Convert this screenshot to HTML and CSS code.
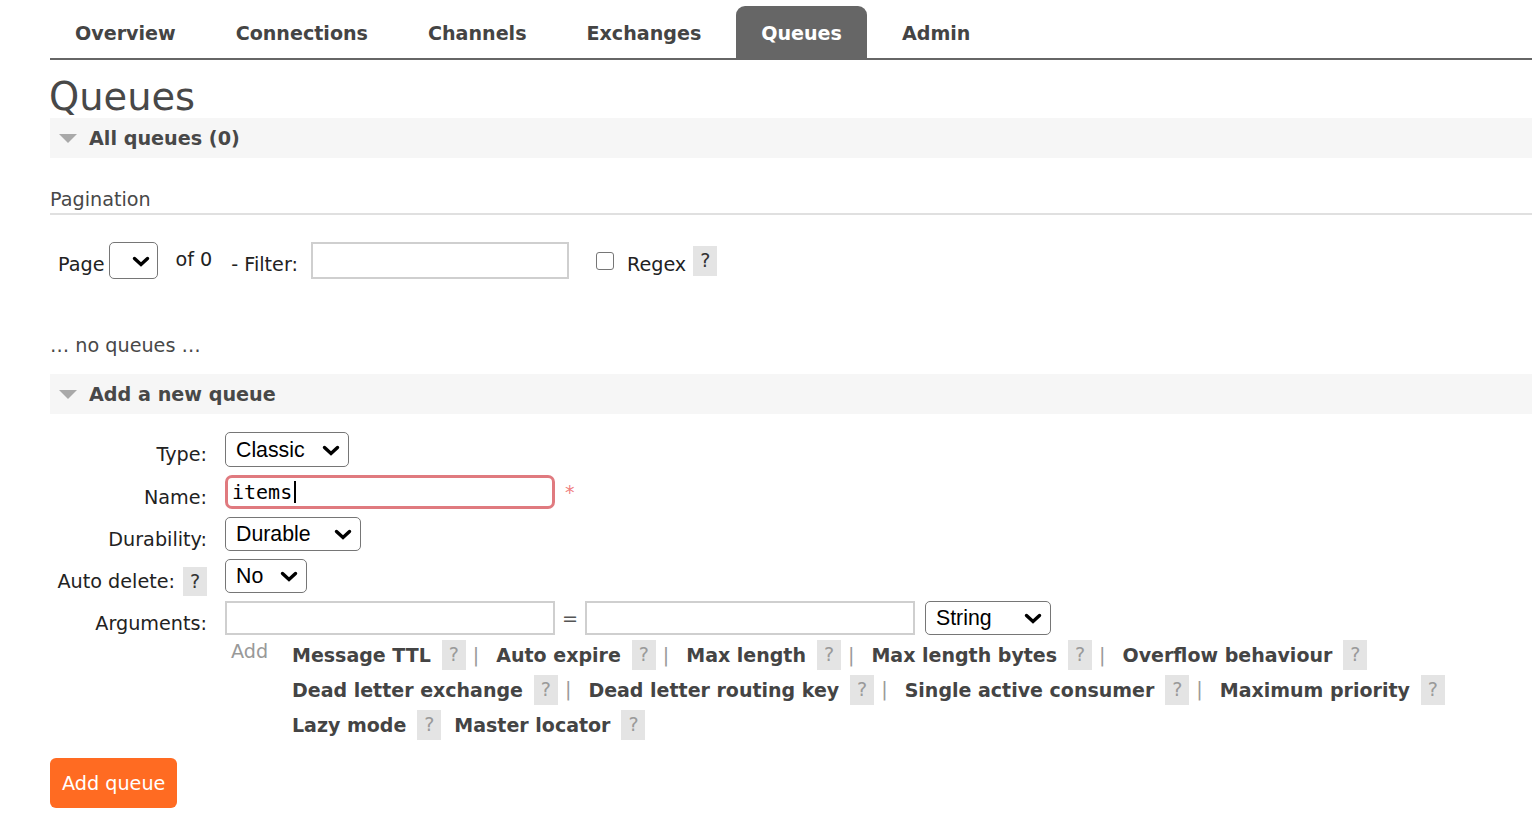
FILE: index.html
```html
<!DOCTYPE html>
<html lang="en">
<head>
<meta charset="utf-8">
<title>RabbitMQ Management: Queues</title>
<link rel="stylesheet" href="styles.css">
</head>
<body>
<div class="page">
  <nav class="tabs">
    <a class="tab">Overview</a>
    <a class="tab">Connections</a>
    <a class="tab">Channels</a>
    <a class="tab">Exchanges</a>
    <a class="tab active">Queues</a>
    <a class="tab">Admin</a>
  </nav>

  <h1 class="title">Queues</h1>

  <div class="section-bar">
    <svg class="tri" width="18" height="9" viewBox="0 0 18 9"><polygon points="0,0 18,0 9,9"/></svg>
    <span>All queues (0)</span>
  </div>

  <h3 class="sub">Pagination</h3>
  <div class="pager">
    <span class="pg-text page-label">Page</span>
    <span class="sel sel-page"><select></select><svg class="chev" width="18" height="11" viewBox="0 0 18 11"><polyline points="2.5,2.5 9,8.5 15.5,2.5"/></svg></span>
    <span class="of">of 0</span>
    <span class="pg-text filter-label">- Filter:</span>
    <input class="field filter" type="text">
    <input class="check" type="checkbox">
    <span class="pg-text regex">Regex</span>
    <span class="help dark">?</span>
  </div>

  <p class="empty">… no queues …</p>

  <div class="section-bar">
    <svg class="tri" width="18" height="9" viewBox="0 0 18 9"><polygon points="0,0 18,0 9,9"/></svg>
    <span>Add a new queue</span>
  </div>

  <div class="form">
    <div class="label">Type:</div>
    <div class="control">
      <span class="sel sel-type"><select><option>Classic</option></select><svg class="chev" width="18" height="11" viewBox="0 0 18 11"><polyline points="2.5,2.5 9,8.5 15.5,2.5"/></svg></span>
    </div>

    <div class="label">Name:</div>
    <div class="control">
      <span class="name-wrap"><input class="name" type="text" value="items"><span class="caret"></span></span>
      <span class="req">*</span>
    </div>

    <div class="label">Durability:</div>
    <div class="control">
      <span class="sel sel-dur"><select><option>Durable</option></select><svg class="chev" width="18" height="11" viewBox="0 0 18 11"><polyline points="2.5,2.5 9,8.5 15.5,2.5"/></svg></span>
    </div>

    <div class="label">Auto delete: <span class="help dark auto-help">?</span></div>
    <div class="control">
      <span class="sel sel-no"><select><option>No</option></select><svg class="chev" width="18" height="11" viewBox="0 0 18 11"><polyline points="2.5,2.5 9,8.5 15.5,2.5"/></svg></span>
    </div>

    <div class="label">Arguments:</div>
    <div class="control">
      <input class="field arg" type="text">
      <span class="eq">=</span>
      <input class="field arg" type="text">
      <span class="sel sel-str"><select><option>String</option></select><svg class="chev" width="18" height="11" viewBox="0 0 18 11"><polyline points="2.5,2.5 9,8.5 15.5,2.5"/></svg></span>
    </div>

    <div class="label empty-label"></div>
    <div class="add-row">
      <span class="add-label">Add</span>
      <div class="links">
        <div class="line">
          <span class="lk">Message TTL</span><span class="help">?</span><span class="sep">|</span>
          <span class="lk">Auto expire</span><span class="help">?</span><span class="sep">|</span>
          <span class="lk">Max length</span><span class="help">?</span><span class="sep">|</span>
          <span class="lk">Max length bytes</span><span class="help">?</span><span class="sep">|</span>
          <span class="lk">Overflow behaviour</span><span class="help">?</span>
        </div>
        <div class="line">
          <span class="lk">Dead letter exchange</span><span class="help">?</span><span class="sep">|</span>
          <span class="lk">Dead letter routing key</span><span class="help">?</span><span class="sep">|</span>
          <span class="lk">Single active consumer</span><span class="help">?</span><span class="sep">|</span>
          <span class="lk">Maximum priority</span><span class="help">?</span>
        </div>
        <div class="line">
          <span class="lk">Lazy mode</span><span class="help">?</span><span class="gap"></span>
          <span class="lk">Master locator</span><span class="help">?</span>
        </div>
      </div>
    </div>
  </div>

  <div class="actions">
    <button class="btn" type="button">Add queue</button>
  </div>
</div>
</body>
</html>
```
FILE: styles.css
```css
* {
  box-sizing: border-box;
}

html, body {
  margin: 0;
  padding: 0;
  background: #fff;
}

body {
  font-family: "DejaVu Sans", Verdana, sans-serif;
  font-size: 19.2px;
  color: #484848;
  overflow: hidden;
}

.page {
  padding-left: 50px;
}

/* ---------- tabs ---------- */
.tabs {
  display: flex;
  gap: 10px;
  padding-top: 6px;
  border-bottom: 2px solid #666;
}

.tab {
  display: block;
  height: 52px;
  line-height: 48px;
  padding: 4px 25px 0;
  font-size: 19.1px;
  font-weight: bold;
  color: #444;
  text-decoration: none;
  border-radius: 9px 9px 0 0;
}

.tab.active {
  background: #666;
  color: #fff;
}

/* ---------- headings ---------- */
.title {
  margin: 16px 0 0 -1px;
  font-size: 38.4px;
  line-height: 42px;
  font-weight: normal;
  color: #484848;
}

.section-bar {
  display: flex;
  align-items: center;
  gap: 12px;
  height: 40px;
  padding-left: 9px;
  background: #f6f6f6;
  font-weight: bold;
  color: #484848;
}

.section-bar span {
  padding-top: 1px;
}

.tri {
  fill: #a9a9a9;
  margin-top: 1px;
}

.sub {
  margin: 30px 0 0;
  padding-bottom: 1px;
  font-size: 19.2px;
  line-height: 24px;
  font-weight: normal;
  color: #484848;
  border-bottom: 2px solid #e0e0e0;
}

/* ---------- pagination ---------- */
.pager {
  display: flex;
  align-items: center;
  height: 37px;
  margin-top: 27px;
  padding-left: 8px;
  color: #222;
}

.pg-text {
  line-height: 24px;
  padding-top: 8px;
}

.of {
  line-height: 24px;
  margin-left: 17px;
  padding-bottom: 1px;
}

.filter-label {
  margin-left: 19px;
}

.sel {
  position: relative;
  display: inline-block;
}

.sel select {
  display: block;
  width: 100%;
  height: 100%;
  appearance: none;
  -webkit-appearance: none;
  margin: 0;
  padding: 0 0 0 10px;
  border: 1.5px solid #767676;
  border-radius: 5px;
  background: #fff;
  font-family: "Liberation Sans", Arial, sans-serif;
  font-size: 21.3px;
  color: #000;
}

.chev {
  position: absolute;
  right: 9px;
  top: 50%;
  margin-top: -5px;
  fill: none;
  stroke: #000;
  stroke-width: 3.4;
  stroke-linecap: round;
  stroke-linejoin: miter;
}

.sel-page {
  width: 49px;
  height: 37px;
  margin-left: 5px;
}

.sel-page .chev {
  right: 8px;
}

.field {
  height: 34px;
  margin: 0;
  padding: 0 6px;
  border: 2px solid #cfcfcf;
  border-radius: 0;
  background: #fff;
  font-family: "DejaVu Sans Mono", monospace;
  font-size: 20px;
}

.filter {
  width: 258px;
  height: 37px;
  margin-left: 13px;
}

.check {
  appearance: none;
  -webkit-appearance: none;
  width: 18px;
  height: 18px;
  margin: 0 0 0 27px;
  border: 1.5px solid #767676;
  border-radius: 3px;
  background: #fff;
}

.regex {
  margin-left: 13px;
}

.help {
  display: inline-block;
  width: 24px;
  height: 30px;
  line-height: 30px;
  text-align: center;
  background: #e4e4e4;
  color: #9a9a9a;
  font-size: 19.2px;
  font-weight: normal;
  margin-left: 11px;
}

.help.dark {
  color: #333;
}

.pager .help {
  margin-left: 7px;
}

.empty {
  margin: 55px 0 16px;
  line-height: 24px;
  color: #484848;
}

/* ---------- form ---------- */
.form {
  display: grid;
  grid-template-columns: 158px 1fr;
  column-gap: 17px;
  row-gap: 8px;
  margin-top: 18px;
}

.label {
  display: flex;
  justify-content: flex-end;
  align-items: center;
  height: 34px;
  padding: 11px 1px 0 0;
  line-height: 24px;
  color: #222;
  white-space: nowrap;
}

.auto-help {
  height: 29px;
  line-height: 29px;
  margin-left: 8px;
}

.control {
  display: flex;
  align-items: center;
}

.sel-type {
  width: 124px;
  height: 35px;
}

.sel-dur {
  width: 136px;
  height: 34px;
}

.sel-no {
  width: 82px;
  height: 34px;
}

.sel-str {
  width: 126px;
  height: 34px;
  margin-left: 10px;
}

.name-wrap {
  position: relative;
  display: inline-block;
}

.name {
  display: block;
  width: 330px;
  height: 34px;
  margin: 0;
  padding: 0 4px;
  border: 3px solid #e07a7f;
  border-radius: 7px;
  background: #fff;
  font-family: "DejaVu Sans Mono", monospace;
  font-size: 20px;
  color: #000;
  outline: none;
}

.caret {
  position: absolute;
  left: 69px;
  top: 6px;
  width: 2px;
  height: 22px;
  background: #000;
}

.req {
  margin-left: 10px;
  margin-top: 0;
  color: #f08080;
  font-size: 19px;
}

.arg {
  width: 330px;
}

.eq {
  width: 30px;
  text-align: center;
  color: #555;
}

.add-row {
  display: flex;
  margin-top: -6px;
}

.add-label {
  width: 67px;
  padding-left: 6px;
  line-height: 30px;
  color: #999;
}

.links {
  display: flex;
  flex-direction: column;
}

.line {
  display: flex;
  align-items: center;
  height: 35px;
  white-space: nowrap;
}

.line:first-child {
  padding-top: 1px;
}

.lk {
  font-size: 19px;
  font-weight: bold;
  color: #444;
}

.sep {
  margin: 0 17px 0 7px;
  color: #9a9a9a;
}

.gap {
  width: 13px;
}

/* ---------- button ---------- */
.actions {
  margin-top: 16px;
}

.btn {
  height: 50px;
  padding: 0 12px;
  border: none;
  border-radius: 6px;
  background: #ff6b22;
  color: #fff;
  font-family: "DejaVu Sans", Verdana, sans-serif;
  font-size: 19.2px;
}
```
